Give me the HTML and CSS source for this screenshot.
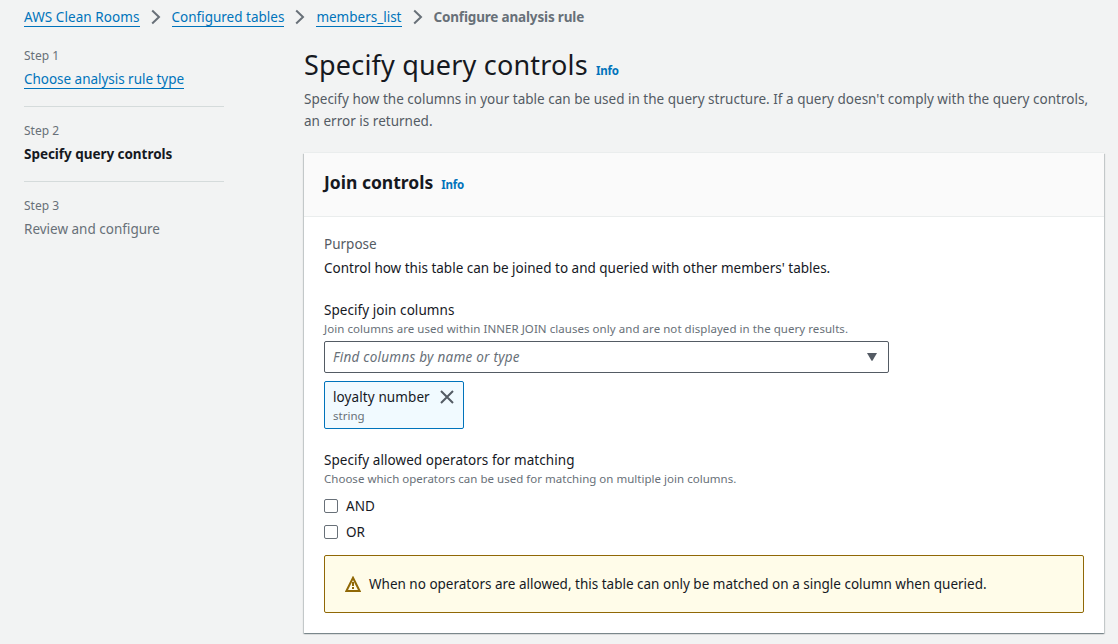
FILE: index.html
```html
<!DOCTYPE html>
<html lang="en">
<head>
<meta charset="utf-8">
<title>Configure analysis rule</title>
<link rel="stylesheet" href="styles.css">
</head>
<body>
<nav class="breadcrumbs">
  <a class="link crumb-service">AWS Clean Rooms</a>
  <svg class="chevron" viewBox="0 0 10 16"><path d="M1.2 1.5 8 8l-6.8 6.5"/></svg>
  <a class="link crumb-tables">Configured tables</a>
  <svg class="chevron" viewBox="0 0 10 16"><path d="M1.2 1.5 8 8l-6.8 6.5"/></svg>
  <a class="link crumb-members">members_list</a>
  <svg class="chevron" viewBox="0 0 10 16"><path d="M1.2 1.5 8 8l-6.8 6.5"/></svg>
  <span class="crumb-current">Configure analysis rule</span>
</nav>
<div class="layout">
  <aside class="steps">
    <div class="step"><div class="step-number">Step 1</div><a class="link step-link">Choose analysis rule type</a></div>
    <div class="step"><div class="step-number">Step 2</div><div class="step-title active">Specify query controls</div></div>
    <div class="step"><div class="step-number">Step 3</div><div class="step-title">Review and configure</div></div>
  </aside>
  <main class="main">
    <header class="page-header"><h1 class="page-title">Specify query controls</h1><a class="info">Info</a></header>
    <p class="description">Specify how the columns in your table can be used in the query structure. If a query doesn't comply with the query controls,<br>an error is returned.</p>
    <section class="card">
      <header class="card-header"><h2 class="card-title">Join controls</h2><a class="info">Info</a></header>
      <div class="card-body">
        <div class="purpose-label">Purpose</div>
        <div class="purpose-text">Control how this table can be joined to and queried with other members' tables.</div>
        <div class="field-label join-label">Specify join columns</div>
        <div class="hint join-hint">Join columns are used within INNER JOIN clauses only and are not displayed in the query results.</div>
        <div class="select"><span class="placeholder">Find columns by name or type</span><svg class="caret" viewBox="0 0 10 8"><path d="M0 0h10L5.6 7.6q-.6.8-1.2 0z"/></svg></div>
        <div class="token">
          <div class="token-text"><div class="token-name">loyalty number</div><div class="token-type">string</div></div>
          <svg class="close" viewBox="0 0 14 14"><path d="M1 1l12 12M13 1 1 13"/></svg>
        </div>
        <div class="field-label operators-label">Specify allowed operators for matching</div>
        <div class="hint operators-hint">Choose which operators can be used for matching on multiple join columns.</div>
        <div class="options">
          <label class="option"><span class="box"></span><span>AND</span></label>
          <label class="option"><span class="box"></span><span>OR</span></label>
        </div>
        <div class="alert">
          <svg class="warning" viewBox="0 0 16 16"><path class="triangle" d="M8 1.8 14.6 15H1.4z"/><path class="mark" d="M8 6v4M8 11v2"/></svg>
          <span class="alert-text">When no operators are allowed, this table can only be matched on a single column when queried.</span>
        </div>
      </div>
    </section>
  </main>
</div>
</body>
</html>
```
FILE: styles.css
```css
* { box-sizing: border-box; }
body {
  margin: 0;
  height: 644px;
  overflow: hidden;
  background: #f2f3f3;
  color: #16191f;
  font: 13.5px/22px "Noto Sans", "Open Sans", sans-serif;
}
h1, h2, p { margin: 0; }
.link { display: block; width: max-content; height: 20px; line-height: 20px; color: #0073bb; border-bottom: 1px solid #0073bb; white-space: nowrap; }
.breadcrumbs { display: flex; align-items: center; height: 34px; padding-left: 24px; }
.crumb-service { letter-spacing: .07px; }
.chevron { width: 10px; height: 16px; margin: 0 11px; flex: none; fill: none; stroke: #687078; stroke-width: 2; }
.crumb-current { color: #687078; font-weight: 700; letter-spacing: -.17px; white-space: nowrap; }
.layout { display: flex; padding-left: 24px; }
.steps { width: 200px; margin-right: 80px; padding-top: 11px; }
.step { height: 75px; }
.step + .step { border-top: 1px solid #d5dbdb; padding-top: 13px; }
.step:first-child { height: 61px; }
.step-number { height: 22px; font-size: 12px; color: #687078; }
.step-title { height: 24px; line-height: 24px; color: #687078; width: max-content; }
.active { color: #16191f; font-weight: 700; letter-spacing: -.04px; }
.step-link { margin-top: 2px; letter-spacing: -.03px; }
.main { width: 800px; }
.page-header { display: flex; align-items: baseline; height: 54px; padding-top: 13px; }
.page-title { font-size: 27px; line-height: 36px; font-weight: 400; letter-spacing: .19px; white-space: nowrap; }
.info { margin-left: 8px; font-size: 11.5px; line-height: 18px; font-weight: 700; letter-spacing: -.2px; color: #0073bb; }
.description { color: #545b64; height: 65px; letter-spacing: .016px; white-space: nowrap; }
.card { height: 480px; background: #fff; box-shadow: 0 -1px 0 0 #eaeded, 0 1px 1px 0 rgba(0,28,36,.3), 1px 1px 1px 0 rgba(0,28,36,.15), -1px 1px 1px 0 rgba(0,28,36,.15); }
.card-header { display: flex; align-items: baseline; height: 64px; padding: 17px 20px 0; background: #fafafa; border-bottom: 1px solid #eaeded; }
.card-title { font-size: 17.5px; line-height: 24px; font-weight: 700; white-space: nowrap; }
.card-body { display: flex; flex-direction: column; align-items: flex-start; padding: 16px 20px 0; white-space: nowrap; }
.purpose-label { color: #545b64; height: 24px; }
.join-label { margin-top: 20px; letter-spacing: .06px; }
.field-label { height: 20px; line-height: 22px; }
.hint { height: 20px; line-height: 19px; font-size: 11.5px; color: #687078; }
.join-hint { letter-spacing: .05px; }
.operators-hint { letter-spacing: .02px; }
.select { display: flex; align-items: center; justify-content: space-between; width: 565px; height: 32px; margin-top: 2px; padding: 0 11px 0 8px; border: 1px solid #545b64; border-radius: 2px; }
.placeholder { color: #687078; font-style: italic; letter-spacing: .25px; }
.caret { width: 10px; height: 8px; fill: #545b64; }
.token { display: flex; justify-content: space-between; width: 140px; height: 48px; margin-top: 8px; padding: 4px 9px 0 8px; background: #f1faff; border: 1px solid #0073bb; border-radius: 2px; }
.token-name { letter-spacing: .1px; }
.token-type { font-size: 11.5px; line-height: 16px; color: #687078; }
.close { width: 14px; height: 14px; margin-top: 4px; fill: none; stroke: #545b64; stroke-width: 2; }
.operators-label { margin-top: 20px; letter-spacing: .06px; }
.options { display: flex; flex-direction: column; gap: 4px; margin-top: 6px; }
.option { display: flex; align-items: center; gap: 8px; height: 22px; }
.box { width: 14px; height: 14px; border: 1px solid #687078; border-radius: 2px; background: #fff; }
.alert { display: flex; align-items: center; width: 760px; height: 58px; margin-top: 12px; padding-left: 20px; background: #fffce9; border: 1px solid #906806; border-radius: 2px; }
.warning { width: 16px; height: 16px; margin-right: 8px; fill: none; stroke: #906806; stroke-width: 2; }
```
